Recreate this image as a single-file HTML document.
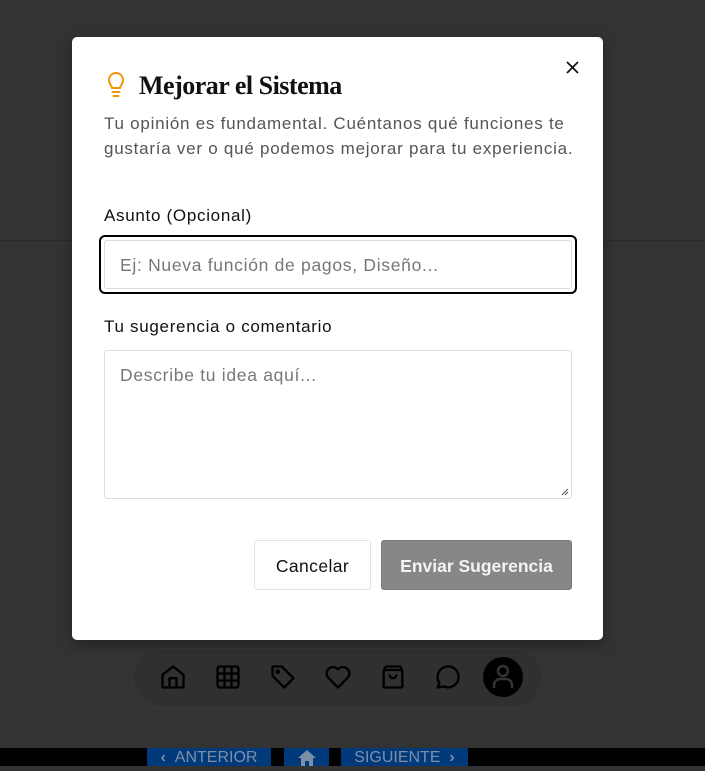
<!DOCTYPE html>
<html><head><meta charset="utf-8"><style>
*{box-sizing:border-box;margin:0;padding:0}
body{width:705px;height:766px;background:#333;position:relative;overflow:hidden;font-family:"Liberation Sans",sans-serif}
.line{position:absolute;left:0;right:0;top:240px;height:1px;background:#2b2b2b}
.nav{position:absolute;left:132px;top:648px;width:411px;height:60px;border-radius:30px;background:#303030;border:1px solid #383838}
.ic{position:absolute;top:663px;width:28px;height:28px}
.av{position:absolute;left:483px;top:657px;width:40px;height:40px;border-radius:50%;background:#000}
.bot{position:absolute;left:0;right:0;top:748px;height:18px;background:#000}
.bb{position:absolute;top:748px;height:18px;background:#003a7a;color:#7d8ea8;font-size:16px;line-height:19px;text-align:center;white-space:nowrap}
.modal{position:absolute;left:72px;top:37px;width:531px;height:603px;background:#fff;border-radius:5px;box-shadow:0 4px 14px rgba(0,0,0,.35)}
.abs{position:absolute}
h1{position:absolute;left:67px;top:34px;font-family:"Liberation Serif",serif;font-weight:bold;font-size:26px;color:#111;letter-spacing:-0.5px}
.desc{position:absolute;left:32px;top:74px;width:500px;font-size:17px;line-height:25px;color:#555;letter-spacing:0.75px}
.lbl{position:absolute;left:32px;font-size:17px;color:#111;letter-spacing:0.7px}
.ring{position:absolute;left:27px;top:198px;width:478px;height:59px;border:2px solid #000;border-radius:6px}
.inp{position:absolute;left:32px;top:203px;width:468px;height:49px;border:1px solid #ddd;border-radius:3px;padding-left:15px;font-size:17.5px;line-height:49px;color:#777;letter-spacing:0.7px}
.ta{position:absolute;left:32px;top:313px;width:468px;height:149px;border:1px solid #ddd;border-radius:3px;padding:14px 15px;font-size:17.5px;color:#777;letter-spacing:0.7px}
.btn{position:absolute;top:503px;height:50px;border-radius:3px;font-size:17.5px;line-height:50px;text-align:center;letter-spacing:0.4px}
</style></head><body>
<div class="line"></div>
<div class="nav"></div>
<svg class="ic" style="left:159px" viewBox="0 0 24 24" fill="none" stroke="#000" stroke-width="2" stroke-linejoin="round"><path d="M3 10l9-7 9 7v10a1 1 0 0 1-1 1H4a1 1 0 0 1-1-1z"/><path d="M9 21v-8h6v8"/></svg>
<svg class="ic" style="left:214px" viewBox="0 0 24 24" fill="none" stroke="#000" stroke-width="2"><rect x="3" y="3" width="18" height="18" rx="2"/><path d="M9 3v18M15 3v18M3 9h18M3 15h18"/></svg>
<svg class="ic" style="left:269px" viewBox="0 0 24 24" fill="none" stroke="#000" stroke-width="2" stroke-linejoin="round"><path d="M3 3h8l10 10-8 8L3 11z"/><circle cx="7.5" cy="7.5" r="1" fill="#000"/></svg>
<svg class="ic" style="left:324px" viewBox="0 0 24 24" fill="none" stroke="#000" stroke-width="2" stroke-linejoin="round"><path d="M12 21l-8.5-8.5A5 5 0 0 1 12 5.5a5 5 0 0 1 8.5 7z"/></svg>
<svg class="ic" style="left:379px" viewBox="0 0 24 24" fill="none" stroke="#000" stroke-width="2" stroke-linejoin="round"><rect x="4" y="6" width="16" height="15" rx="1"/><path d="M4 6l2-3h12l2 3M9 10a3 3 0 0 0 6 0"/></svg>
<svg class="ic" style="left:433px" viewBox="0 0 24 24" fill="none" stroke="#000" stroke-width="2" stroke-linejoin="round"><path d="M4 21l1.5-4A9 9 0 1 1 9 20z"/></svg>
<div class="av"><svg width="40" height="40" viewBox="0 0 40 40" fill="none" stroke="#333" stroke-width="2.5"><circle cx="20" cy="14" r="5"/><path d="M11 31v-3a6 6 0 0 1 6-6h6a6 6 0 0 1 6 6v3"/></svg></div>
<div class="bot"></div>
<div class="bb" style="left:147px;width:124px"><b>‹</b>&nbsp;&nbsp;ANTERIOR</div>
<div class="bb" style="left:284px;width:45px"><svg width="22" height="18" viewBox="0 0 22 18"><path d="M2 10L11 2l9 8h-3v8h-4v-5h-4v5H5v-8z" fill="#7d8ea8"/></svg></div>
<div class="bb" style="left:341px;width:127px">SIGUIENTE&nbsp;&nbsp;<b>›</b></div>
<div class="modal">
<svg class="abs" style="left:34px;top:35px" width="20" height="26" viewBox="0 0 20 26" fill="none" stroke="#f0960a" stroke-width="2" stroke-linecap="round"><path d="M6 16c0-2-3-4-3-8a7 7 0 0 1 14 0c0 4-3 6-3 8z"/><path d="M6.5 20h7M7.5 24h5"/></svg>
<h1>Mejorar el Sistema</h1>
<svg class="abs" style="left:494px;top:24px" width="13" height="13" viewBox="0 0 13 13" stroke="#111" stroke-width="1.7"><path d="M1 1l11 11M12 1L1 12"/></svg>
<div class="desc">Tu opinión es fundamental. Cuéntanos qué funciones te<br>gustaría ver o qué podemos mejorar para tu experiencia.</div>
<div class="lbl" style="top:169px">Asunto (Opcional)</div>
<div class="ring"></div>
<div class="inp">Ej: Nueva función de pagos, Diseño...</div>
<div class="lbl" style="top:280px">Tu sugerencia o comentario</div>
<div class="ta">Describe tu idea aquí...
<svg class="abs" style="right:2px;bottom:2px" width="8" height="8" stroke="#555" stroke-width="1"><path d="M1 7L7 1M4 7L7 4"/></svg></div>
<div class="btn" style="left:182px;width:117px;border:1px solid #e3e3e3;color:#111">Cancelar</div>
<div class="btn" style="left:309px;width:191px;background:#878787;border:1px solid #7a7a7a;color:#f4f4f4;font-weight:bold;letter-spacing:0">Enviar Sugerencia</div>
</div>
</body></html>
